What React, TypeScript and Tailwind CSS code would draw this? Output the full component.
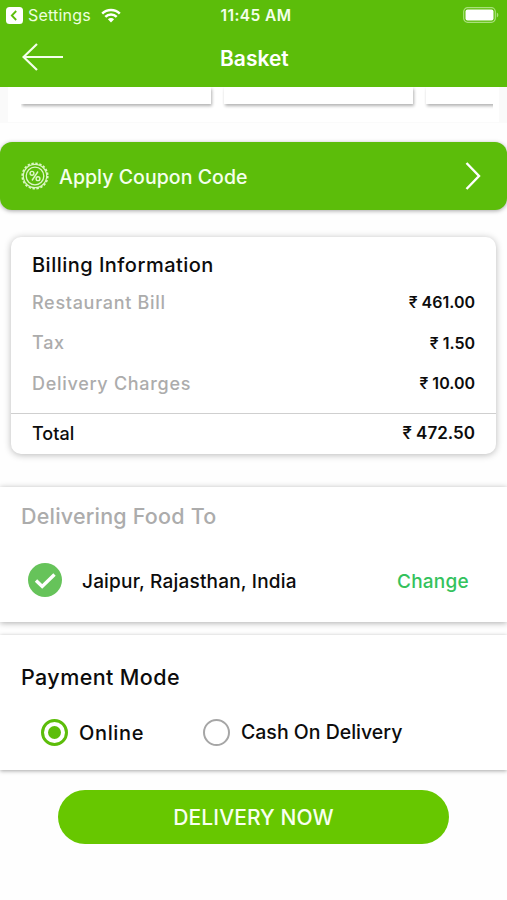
import { useState } from "react"
import clsx from "clsx"

type PaymentMode = "online" | "cash"

const charges = [
  { label: "Restaurant Bill", amount: "461.00" },
  { label: "Tax", amount: "1.50" },
  { label: "Delivery Charges", amount: "10.00" },
]

function StatusBar() {
  return (
    <div className="flex h-[30px] items-center justify-between pl-[6px] pr-[8px]">
      <div className="flex w-[160px] items-center">
        <svg width="17" height="17" viewBox="0 0 17 17">
          <rect width="17" height="17" rx="3.5" fill="#fff" />
          <path d="M10.2 4 5.8 8.5l4.4 4.5" fill="none" stroke="#5cbd0a" strokeWidth="1.8" />
        </svg>
        <span className="ml-[5px] text-[16px] tracking-[0.2px] text-[#ecffdf]">Settings</span>
        <svg className="ml-[10px]" width="20" height="15" viewBox="0 0 20 15">
          <g fill="none" stroke="#fff" strokeWidth="2.5">
            <path d="M1.2 5.6a12.4 12.4 0 0 1 17.6 0" />
            <path d="M4.3 8.8a8 8 0 0 1 11.4 0" />
          </g>
          <path d="M6.9 11.3a4.4 4.4 0 0 1 6.2 0L10 14.5Z" fill="#fff" />
        </svg>
      </div>
      <span className="pt-px pl-[7px] text-[15.5px] font-semibold tracking-[0.4px] whitespace-nowrap text-[#f4ffec]">
        11:45 AM
      </span>
      <div className="flex w-[160px] justify-end">
        <svg width="36" height="16" viewBox="0 0 36 16">
          <rect x="0.7" y="0.7" width="31.6" height="14.6" rx="4" fill="none" stroke="#a9e07c" strokeWidth="1.2" />
          <rect x="2.5" y="2.5" width="28" height="11" rx="2" fill="#fff" />
          <path d="M33.8 5.5v5c2-.8 2-4.2 0-5Z" fill="#a9e07c" />
        </svg>
      </div>
    </div>
  )
}

function Header() {
  return (
    <header className="h-[87px] bg-[#5cbd0a] text-white">
      <StatusBar />
      <div className="flex h-[56px] items-center pl-[22px]">
        <button className="w-[198px]" aria-label="Back">
          <svg width="42" height="30" viewBox="0 0 42 30">
            <path
              d="M15 1 1.5 14 15 27M1.500 14H41"
              fill="none"
              stroke="#f4ffec"
              strokeWidth="2.2"
            />
          </svg>
        </button>
        <h1 className="pt-[2px] text-[21px] font-semibold">Basket</h1>
      </div>
    </header>
  )
}

function CouponIcon() {
  return (
    <svg width="28" height="28" viewBox="0 0 28 28" fill="none" stroke="#dcf7c6">
      <circle cx="14" cy="14" r="11.7" strokeWidth="1.2" />
      <circle cx="14" cy="14" r="12.8" strokeWidth="1.6" strokeDasharray="2.4 1.62" />
      <circle cx="14" cy="14" r="8.8" strokeWidth="1.3" />
      <circle cx="11" cy="11.3" r="1.9" strokeWidth="1.4" />
      <circle cx="17" cy="16.7" r="1.9" strokeWidth="1.4" />
      <path d="m17 9.5-6 9" strokeWidth="1.4" />
    </svg>
  )
}

function BillingCard() {
  return (
    <section className="mx-[11px] mt-[27px] h-[217px] rounded-[10px] bg-white shadow-[0_1px_7px_rgba(0,0,0,0.28)]">
      <div className="h-[177px] border-b border-[#cfcfcf] px-[21px] pt-[13px]">
        <h2 className="text-[20px] leading-[30px] font-medium tracking-[0.48px]">Billing Information</h2>
        <div className="mt-[2px]">
          {charges.map(({ label, amount }) => (
            <div key={label} className="flex h-[40.5px] items-center justify-between">
              <span className="text-[18px] font-medium tracking-[0.7px] text-[#acacac]">{label}</span>
              <span className="text-[16px] font-semibold">
                <span className="font-medium">₹</span> {amount}
              </span>
            </div>
          ))}
        </div>
      </div>
      <div className="flex h-[39px] items-center justify-between px-[21px]">
        <span className="text-[18px] font-medium">Total</span>
        <span className="text-[17px] font-semibold">
          <span className="font-medium">₹</span> 472.50
        </span>
      </div>
    </section>
  )
}

type RadioOptionProps = {
  label: string
  checked: boolean
  className: string
  onSelect: () => void
}

function RadioOption({ label, checked, className, onSelect }: RadioOptionProps) {
  return (
    <button role="radio" aria-checked={checked} onClick={onSelect} className="flex items-center gap-[11px]">
      <span
        className={clsx(
          "flex size-[27px] items-center justify-center rounded-full",
          checked ? "border-[3px] border-[#5cbd0a]" : "border-2 border-[#a6a6a6]"
        )}
      >
        {checked && <span className="size-[13px] rounded-full bg-[#5cbd0a]" />}
      </span>
      <span className={clsx("font-medium whitespace-nowrap", className)}>{label}</span>
    </button>
  )
}

export default function App() {
  const [mode, setMode] = useState<PaymentMode>("online")

  return (
    <div className="h-[900px] w-[507px] overflow-hidden bg-[#fefefe] font-['Inter','Noto_Sans',sans-serif] text-[#0c0c0c]">
      <Header />

      {/* Bottom edge of the item carousel, scrolled under the header */}
      <div className="h-[36px] bg-[#fafafa] px-[8px]">
        <div className="h-[35px] overflow-hidden bg-white pr-[6px] pl-[13px]">
          <div className="flex h-[26px] gap-[13px] overflow-hidden">
            <div className="h-[17px] w-[190px] shrink-0 bg-white shadow-[1px_2px_3px_rgba(0,0,0,0.3)]" />
            <div className="h-[17px] w-[189px] shrink-0 bg-white shadow-[1px_2px_3px_rgba(0,0,0,0.3)]" />
            <div className="h-[17px] w-[189px] shrink-0 bg-white shadow-[1px_2px_3px_rgba(0,0,0,0.3)]" />
          </div>
        </div>
      </div>

      <button className="mt-[19px] flex h-[68px] w-full items-center rounded-[12px] bg-[#5cbd0a] pr-[26px] pl-[21px] text-[#f4ffec] shadow-[0_1px_4px_rgba(0,0,0,0.35)]">
        <CouponIcon />
        <span className="ml-[10px] pt-[3px] text-[19.5px] font-medium tracking-[0.06px]">Apply Coupon Code</span>
        <svg className="ml-auto" width="16" height="28" viewBox="0 0 16 28">
          <path d="M1.5 1 14 14 1.5 27" fill="none" stroke="#fff" strokeWidth="2.4" />
        </svg>
      </button>

      <BillingCard />

      <section className="mt-[33px] h-[135px] bg-white pt-[12px] shadow-[0_1px_6px_rgba(0,0,0,0.32)]">
        <h2 className="pl-[21px] text-[21.5px] leading-[34px] font-medium tracking-[0.2px] text-[#acacac]">
          Delivering Food To
        </h2>
        <div className="mt-[30px] flex h-[34px] items-center pr-[38px] pl-[28px]">
          <svg width="34" height="34" viewBox="0 0 34 34">
            <circle cx="17" cy="17" r="17" fill="#66c35a" />
            <path d="m8 17.5 6.2 6L26.5 11.5" fill="none" stroke="#fff" strokeWidth="3.4" />
          </svg>
          <span className="ml-[20px] pt-[4px] text-[19px] font-medium tracking-[0.2px]">Jaipur, Rajasthan, India</span>
          <button className="ml-auto pt-[4px] text-[19px] font-medium tracking-[0.25px] text-[#34c25c]">Change</button>
        </div>
      </section>

      <section className="mt-[13px] h-[135px] bg-white pt-[25px] shadow-[0_1px_4px_rgba(0,0,0,0.35)]">
        <h2 className="pl-[21px] text-[21.5px] leading-[34px] font-medium tracking-[0.4px]">Payment Mode</h2>
        <div role="radiogroup" className="mt-[25px] flex h-[27px] items-center pl-[41px]">
          <div className="w-[162px]">
            <RadioOption
              label="Online"
              checked={mode === "online"}
              className="text-[20px] tracking-[0.65px]"
              onSelect={() => setMode("online")}
            />
          </div>
          <RadioOption
            label="Cash On Delivery"
            checked={mode === "cash"}
            className="pt-px text-[19.5px]"
            onSelect={() => setMode("cash")}
          />
        </div>
      </section>

      <button className="mt-[20px] ml-[58px] h-[54px] w-[391px] rounded-full bg-[#67c700] pt-[2px] text-[21px] font-medium tracking-[0.1px] text-[#f8fff0]">
        DELIVERY NOW
      </button>
    </div>
  )
}
